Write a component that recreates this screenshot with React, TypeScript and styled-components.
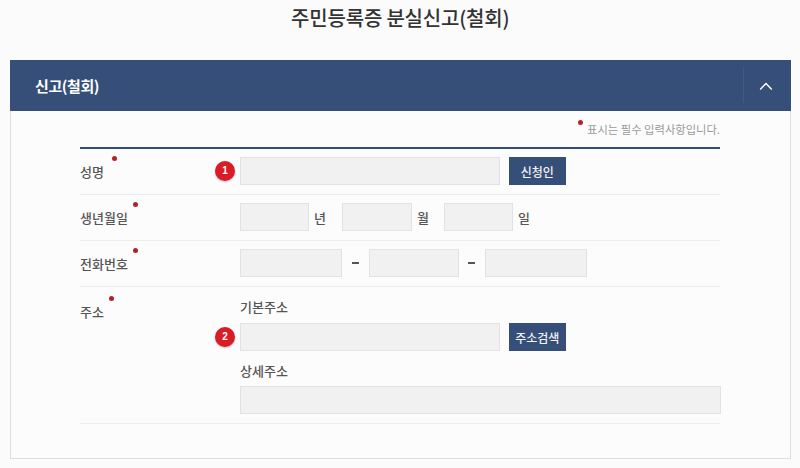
import styled, {createGlobalStyle} from 'styled-components';

const GlobalStyle = createGlobalStyle`
  html, body {
    margin: 0;
    padding: 0;
    background: #fbfbfb;
    font-family: 'Noto Sans CJK KR', 'Noto Sans', sans-serif;
    color: #444;
  }
  * {
    box-sizing: border-box;
  }
`;

function App() {
  return (
    <Page>
      <GlobalStyle />
      <Title>주민등록증 분실신고(철회)</Title>
      <Panel>
        <PanelHeader>
          <PanelTitle>신고(철회)</PanelTitle>
          <Collapse>
            <svg width="14" height="8" viewBox="0 0 14 8" fill="none">
              <path d="M1.2 7.4 7 1.4l5.8 6" stroke="#fff" strokeWidth="1.4" />
            </svg>
          </Collapse>
        </PanelHeader>
        <PanelBody>
          <Note>표시는 필수 입력사항입니다.</Note>
          <Form>
            <Row>
              <Label $dot={32}>성명</Label>
              <Field>
                <Inline>
                  <Badge>1</Badge>
                  <Input $w={260} />
                  <Button>신청인</Button>
                </Inline>
              </Field>
            </Row>
            <Row>
              <Label $dot={53}>생년월일</Label>
              <Field>
                <Inline>
                  <Input $w={69} />
                  <Unit $w={33}>년</Unit>
                  <Input $w={70} />
                  <Unit $w={32}>월</Unit>
                  <Input $w={69} />
                  <Unit $w={16}>일</Unit>
                </Inline>
              </Field>
            </Row>
            <Row>
              <Label $dot={53}>전화번호</Label>
              <Field>
                <Inline>
                  <Input $w={102} />
                  <Dash />
                  <Input $w={90} />
                  <Dash />
                  <Input $w={102} />
                </Inline>
              </Field>
            </Row>
            <AddressRow>
              <Label $dot={29}>주소</Label>
              <Field>
                <SubLabel>기본주소</SubLabel>
                <Inline>
                  <Badge>2</Badge>
                  <Input $w={260} />
                  <Button>주소검색</Button>
                </Inline>
                <SubLabelNext>상세주소</SubLabelNext>
                <Input $w={481} />
              </Field>
            </AddressRow>
          </Form>
        </PanelBody>
      </Panel>
    </Page>
  );
}

const Page = styled.div`
  width: 800px;
  height: 468px;
  padding: 0 9.5px 0 10px;
  overflow: hidden;
`;

const Title = styled.h1`
  margin: 0;
  height: 60px;
  padding-top: 3px;
  font-size: 20px;
  line-height: 30px;
  font-weight: 500;
  text-align: center;
  color: #333;
  letter-spacing: -0.2px;
`;

const Panel = styled.section`
  height: 398.5px;
  border: 1px solid #dedede;
  border-top: 0;
  background: #fcfcfc;
`;

const PanelHeader = styled.header`
  height: 51px;
  margin: 0 -1px;
  padding: 8px 0 8px 25px;
  display: flex;
  align-items: center;
  justify-content: space-between;
  background: #354f79;
`;

const PanelTitle = styled.h2`
  margin: 0;
  font-size: 15px;
  font-weight: 700;
  color: #fff;
  letter-spacing: -0.4px;
`;

const Collapse = styled.button`
  width: 48px;
  height: 35px;
  padding: 0 3px 0 0;
  display: flex;
  align-items: center;
  justify-content: center;
  background: transparent;
  border: 0;
  border-left: 1px solid #43597f;
`;

const PanelBody = styled.div`
  padding: 0 69.5px 0 69px;
`;

const Note = styled.p`
  position: relative;
  width: fit-content;
  margin: 0 0 0 auto;
  height: 36px;
  padding-top: 8px;
  font-size: 11.3px;
  line-height: 20px;
  color: #9a9a9a;

  &::before {
    content: '';
    position: absolute;
    left: -9px;
    top: 9px;
    width: 5px;
    height: 5px;
    border-radius: 50%;
    background: #b3202a;
  }
`;

const Form = styled.div`
  border-top: 2px solid #354f79;
`;

const Row = styled.div`
  display: grid;
  grid-template-columns: 160px 1fr;
  height: 46px;
  padding-top: 8px;
  border-bottom: 1px solid #ececec;
`;

const AddressRow = styled(Row)`
  height: 137px;
  padding-top: 0;
`;

const Label = styled.div<{$dot: number}>`
  position: relative;
  height: 28px;
  font-size: 13px;
  line-height: 29px;
  font-weight: 500;
  color: #555;

  ${AddressRow} > & {
    margin-top: 10px;
  }

  &::after {
    content: '';
    position: absolute;
    left: ${p => p.$dot}px;
    top: -1px;
    width: 5px;
    height: 5px;
    border-radius: 50%;
    background: #b3202a;
  }
`;

const Field = styled.div`
  display: flex;
  flex-direction: column;
`;

const Inline = styled.div`
  position: relative;
  display: flex;
  align-items: center;
`;

const Input = styled.div<{$w: number}>`
  width: ${p => p.$w}px;
  height: 28px;
  flex: none;
  background: #f1f1f1;
  border: 1px solid #e2e2e2;
`;

const Button = styled.button`
  width: 56.5px;
  height: 28px;
  margin-left: 9px;
  padding: 0;
  background: #354f79;
  border: 0;
  font-family: inherit;
  font-size: 12px;
  font-weight: 500;
  color: #f2f2f2;
`;

const Badge = styled.span`
  position: absolute;
  left: -25px;
  top: 4px;
  width: 20px;
  height: 20px;
  border-radius: 50%;
  background: #d91c28;
  box-shadow: 0 1px 2px rgba(0, 0, 0, 0.25);
  font-family: 'Liberation Sans', sans-serif;
  font-size: 10px;
  font-weight: 700;
  line-height: 20px;
  text-align: center;
  color: #fff;
`;

const Unit = styled.span<{$w: number}>`
  width: ${p => p.$w}px;
  padding-left: 5px;
  flex: none;
  font-size: 13px;
  font-weight: 500;
  color: #555;
`;

const Dash = styled.span`
  width: 26.5px;
  flex: none;
  display: flex;
  justify-content: center;

  &::before {
    content: '';
    width: 7px;
    height: 2px;
    background: #555;
  }
`;

const SubLabel = styled.div`
  height: 36px;
  padding-top: 8px;
  font-size: 13px;
  line-height: 24px;
  font-weight: 500;
  color: #555;
`;

const SubLabelNext = styled(SubLabel)`
  height: 35px;
  padding-top: 8px;
`;

export default App;
